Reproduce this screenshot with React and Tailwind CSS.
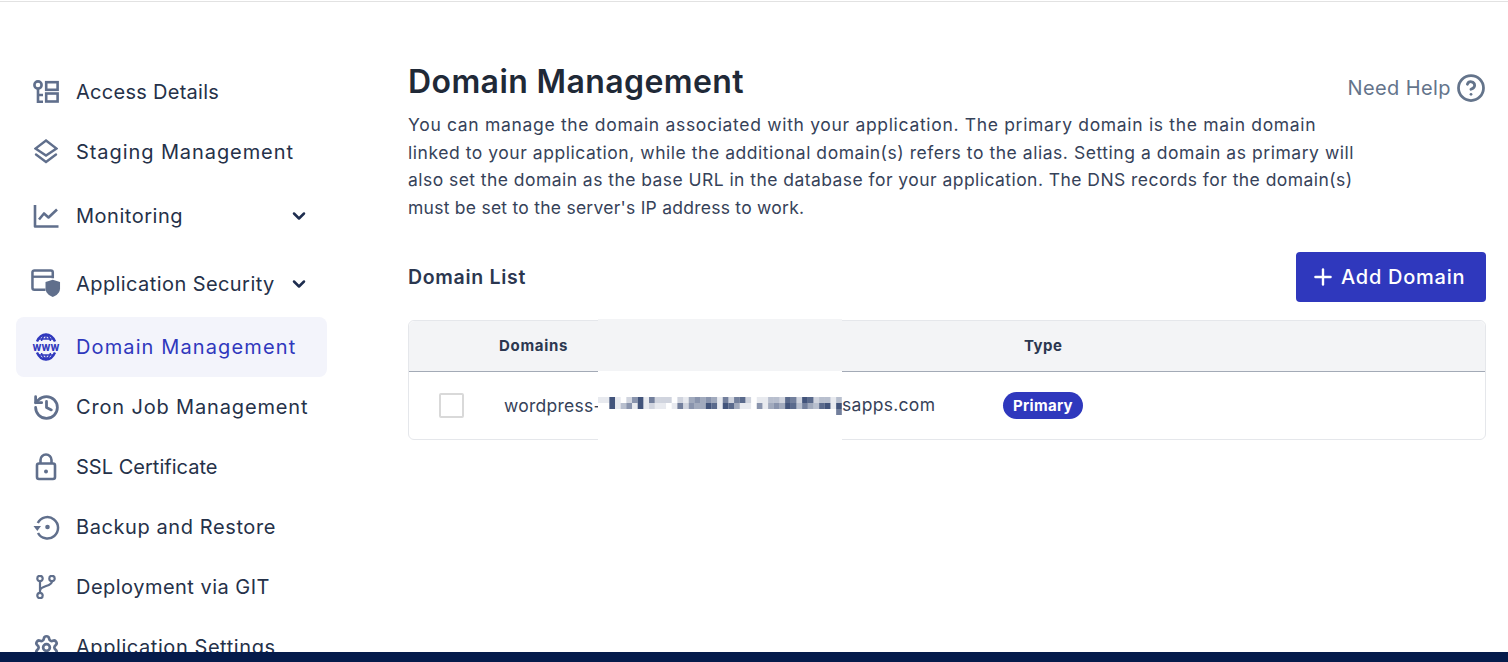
import React from "react";
import { ChevronDown, History, Settings, CircleHelp, Plus } from "lucide-react";

const FONT = "font-['Inter','Noto_Sans',sans-serif]";

function KeyIcon() {
  return (
    <svg width="28" height="24" viewBox="0 0 28 24" fill="none" stroke="currentColor" strokeWidth="2.6">
      <circle cx="6" cy="5" r="3.6" />
      <path d="M6 8.6V23M6 15h5M6 21.7h5" />
      <rect x="14.2" y="2.2" width="11.4" height="7.6" />
      <rect x="14.2" y="13.5" width="11.4" height="8" />
    </svg>
  );
}
function LayerIcon() {
  return (
    <svg width="24" height="26" viewBox="0 0 24 26" fill="none" stroke="currentColor" strokeWidth="2.4" strokeLinejoin="miter" strokeLinecap="round">
      <path d="M12 1.500 22.500 9.500 12 16.500 1.500 9.500Z" />
      <path d="M2 15.500 12 23 22 15.500" />
    </svg>
  );
}
function ChartIcon() {
  return (
    <svg width="26" height="24" viewBox="0 0 26 24" fill="none" stroke="currentColor" strokeWidth="2.6" strokeLinejoin="round">
      <path d="M2 1v21.500h23.500" />
      <path d="M6 15.500 11 9.500l4.500 4 8.500-8" />
    </svg>
  );
}
function SecurityIcon() {
  return (
    <svg width="31" height="29" viewBox="0 0 31 29" fill="none">
      <path d="M15 21H3.500a2 2 0 0 1-2-2V3a2 2 0 0 1 2-2h17a2 2 0 0 1 2 2v6" stroke="currentColor" strokeWidth="2.600" />
      <path d="M1.500 7.500h21" stroke="currentColor" strokeWidth="2.400" />
      <path d="M22.500 10.500l7.500 2.500v6.500c0 4.300-3.200 7.500-7.500 9-4.300-1.500-7.500-4.700-7.500-9V13Z" fill="currentColor" />
    </svg>
  );
}
function WwwIcon() {
  return (
    <svg width="30" height="28" viewBox="0 0 30 28" fill="none" stroke="currentColor">
      <path d="M6 8.500C8 4 11 1.500 15 1.500S22 4 24 8.500M6 19.500C8 24 11 26.500 15 26.500S22 24 24 19.500" strokeWidth="2.400" />
      <path d="M7 6h16M7 22h16M15 1.500v5M15 21.500v5M10.500 8C11 5 12.500 3 15 1.500 17.500 3 19 5 19.500 8M10.500 20C11 23 12.500 25 15 26.500 17.500 25 19 23 19.500 20" strokeWidth="1.500" />
      <text x="1.500" y="17.500" textLength="27" lengthAdjust="spacingAndGlyphs" fontSize="9" fontWeight="800" fill="currentColor" stroke="none" fontFamily="Inter, sans-serif">WWW</text>
    </svg>
  );
}
function BackupIcon() {
  return (
    <svg width="27" height="26" viewBox="0 0 27 26" fill="none" stroke="currentColor" strokeWidth="2.500">
      <path d="M4.800 9A10.700 10.700 0 1 1 5 19" />
      <path d="M0.500 12h7.500L4.300 17Z" fill="currentColor" stroke="none" />
      <circle cx="14.500" cy="13" r="2.300" fill="currentColor" stroke="none" />
    </svg>
  );
}
function LockIcon() {
  return (
    <svg width="22" height="28" viewBox="0 0 22 28" fill="none" stroke="currentColor" strokeWidth="2.600">
      <rect x="2" y="10.500" width="18" height="15.500" rx="2" />
      <path d="M5.500 10.500V7a5.500 5.500 0 0 1 11 0v3.500" />
      <circle cx="11" cy="18.500" r="2" fill="currentColor" stroke="none" />
    </svg>
  );
}
function GitIcon() {
  return (
    <svg width="20" height="24" viewBox="0 0 20 24" fill="none" stroke="currentColor" strokeWidth="2.200">
      <circle cx="4" cy="3.500" r="2.700" />
      <circle cx="16" cy="3.500" r="2.700" />
      <circle cx="4" cy="20.500" r="2.700" />
      <path d="M4 6.200v11.600M16 6.200c0 5.800-12 3.800-12 9.800" />
    </svg>
  );
}

function NavRow({ icon, label, track, h = "h-[60px]", active = false, chevron = false }) {
  return (
    <div className={`flex items-center ${h} ${active ? "rounded-lg bg-[#f3f4fb] text-[#3038bd]" : "text-[#253149]"} pl-[15px] pr-[18px]`}>
      <div className={`flex w-[30px] shrink-0 justify-center ${active ? "text-[#3038bd]" : "text-[#606f8c]"}`}>{icon}</div>
      <span className={`ml-[15px] flex-1 whitespace-nowrap text-[20px] leading-[30px] ${track}`}>{label}</span>
      {chevron && <ChevronDown size={20} strokeWidth={3} className="text-[#1e2d4f]" />}
    </div>
  );
}

const TOP = "1181025816222021454541626720113327628723313";
const MID = "0081351812110162544871874110514548736437818";
const LOW = "0000000000000000000000000000000000000000006";

function Pixels() {
  const rows = [TOP, MID, LOW];
  return (
    <svg width="244" height="18" viewBox="0 0 244 18" className="block">
      {rows.map((row, y) =>
        row.split("").map((c, x) =>
          c === "0" ? null : (
            <rect key={`${x}-${y}`} x={x * 5.67} y={y * 6} width="5.67" height="6" fill="#2b3f6b" fillOpacity={Number(c) / 9} />
          )
        )
      )}
    </svg>
  );
}

export default function App() {
  return (
    <div className={`flex h-[662px] w-full flex-col overflow-hidden bg-white ${FONT}`}>
      <div className="mt-px h-px shrink-0 bg-[#e2e2e2]" />
      <div className="flex min-h-0 flex-1 overflow-hidden">
        <aside className="w-[408px] shrink-0 pl-4 pt-[60px]">
          <nav className="w-[311px]">
            <NavRow icon={<KeyIcon />} label="Access Details" track="tracking-[0.28px]" />
            <NavRow icon={<LayerIcon />} label="Staging Management" track="tracking-[0.92px]" />
            <NavRow icon={<ChartIcon />} label="Monitoring" track="tracking-[0.52px]" h="h-[68px]" chevron />
            <NavRow icon={<SecurityIcon />} label="Application Security" track="tracking-[0.42px]" h="h-[67px]" chevron />
            <NavRow icon={<WwwIcon />} label="Domain Management" track="tracking-[1.12px]" active />
            <NavRow icon={<History size={29} strokeWidth={2.3} />} label="Cron Job Management" track="tracking-[0.84px]" />
            <NavRow icon={<LockIcon />} label="SSL Certificate" track="tracking-[0.02px]" />
            <NavRow icon={<BackupIcon />} label="Backup and Restore" track="tracking-[0.59px]" />
            <NavRow icon={<GitIcon />} label="Deployment via GIT" track="tracking-[0.48px]" />
            <NavRow icon={<Settings size={27} strokeWidth={2.4} />} label="Application Settings" track="tracking-[0.57px]" />
          </nav>
        </aside>
        <main className="min-w-0 flex-1 pr-[22px] pt-[62px]">
          <div className="flex items-center justify-between">
            <h1 className="text-[32px] font-semibold leading-[36px] tracking-[0.4px] text-[#1f2937]">Domain Management</h1>
            <div className="mb-[-6px] mt-[6px] flex items-center text-[#64748b]">
              <span className="text-[20px] leading-[30px] tracking-[0.4px]">Need Help</span>
              <CircleHelp size={30} strokeWidth={2.2} className="ml-[5px]" />
            </div>
          </div>
          <div className="mt-[11px] whitespace-nowrap text-[17.5px] leading-[27.6px] text-[#364259]">
            <p className="tracking-[0.68px]">You can manage the domain associated with your application. The primary domain is the main domain</p>
            <p className="tracking-[0.54px]">linked to your application, while the additional domain(s) refers to the alias. Setting a domain as primary will</p>
            <p className="tracking-[0.45px]">also set the domain as the base URL in the database for your application. The DNS records for the domain(s)</p>
            <p className="tracking-[0.25px]">must be set to the server's IP address to work.</p>
          </div>
          <div className="mt-[31px] flex items-center justify-between">
            <h2 className="text-[19.5px] font-semibold leading-[28px] tracking-[0.7px] text-[#2b3750]">Domain List</h2>
            <button className="flex h-[50px] w-[190px] items-center justify-start rounded-[4px] bg-[#2f38bd] pl-[14px] text-[20px] font-medium tracking-[0.75px] text-white">
              <Plus size={26} strokeWidth={2.2} className="mr-[5px]" />
              Add Domain
            </button>
          </div>
          <div className="relative mt-[18px] h-[120px] rounded-[6px] border border-[#e5e7eb]">
            <div className="flex h-[51px] rounded-t-[6px] border-b border-[#a3aab6] bg-[#f3f4f6] text-[15px] font-bold text-[#2b3750]">
              <div className="w-[615px] pl-[90px] leading-[49px] tracking-[0.7px]">Domains</div>
              <div className="leading-[49px] tracking-[0.5px]">Type</div>
            </div>
            <div className="flex h-[67px] items-center">
              <div className="ml-[30px] h-[25px] w-[25px] rounded-[2px] border-2 border-[#d9d9d9]" />
              <div className="ml-[40px] w-[499px] whitespace-nowrap text-[17.5px] tracking-[0.25px] text-[#364259]">wordpress-</div>
              <div className="flex h-[27px] w-[80px] items-center justify-center rounded-full bg-[#2f38bd] text-[15px] font-bold tracking-[0.3px] text-white">Primary</div>
            </div>
            <div className="absolute left-[189px] top-[-2px] h-[122px] w-[244px] bg-white">
              <div className="h-[52px] bg-[#f3f4f6]" />
              <div className="pt-[26px]"><Pixels /></div>
            </div>
            <div className="absolute left-[433px] top-[71px] whitespace-nowrap text-[17.5px] leading-[26px] tracking-[0.3px] text-[#364259]">sapps.com</div>
          </div>
        </main>
      </div>
      <div className="h-[10px] shrink-0 bg-[#051b4b]" />
    </div>
  );
}
